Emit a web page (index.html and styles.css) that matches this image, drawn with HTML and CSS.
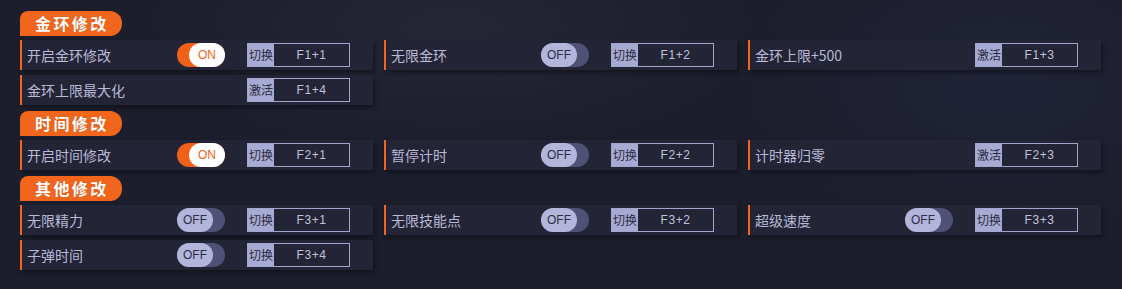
FILE: index.html
```html
<!DOCTYPE html>
<html lang="zh">
<head>
<meta charset="utf-8">
<link rel="stylesheet" href="styles.css">
</head>
<body>
<div class="page">
  <section class="section">
    <div class="badge">金环修改</div>
    <div class="grid">
      <div class="row"><span class="label">开启金环修改</span><span class="toggle on"><span class="knob">ON</span></span><span class="key"><span class="act">切换</span><span class="combo">F1+1</span></span></div>
      <div class="row"><span class="label">无限金环</span><span class="toggle"><span class="knob">OFF</span></span><span class="key"><span class="act">切换</span><span class="combo">F1+2</span></span></div>
      <div class="row"><span class="label">金环上限+500</span><span></span><span class="key"><span class="act">激活</span><span class="combo">F1+3</span></span></div>
      <div class="row"><span class="label">金环上限最大化</span><span></span><span class="key"><span class="act">激活</span><span class="combo">F1+4</span></span></div>
    </div>
  </section>
  <section class="section">
    <div class="badge">时间修改</div>
    <div class="grid">
      <div class="row"><span class="label">开启时间修改</span><span class="toggle on"><span class="knob">ON</span></span><span class="key"><span class="act">切换</span><span class="combo">F2+1</span></span></div>
      <div class="row"><span class="label">暂停计时</span><span class="toggle"><span class="knob">OFF</span></span><span class="key"><span class="act">切换</span><span class="combo">F2+2</span></span></div>
      <div class="row"><span class="label">计时器归零</span><span></span><span class="key"><span class="act">激活</span><span class="combo">F2+3</span></span></div>
    </div>
  </section>
  <section class="section">
    <div class="badge">其他修改</div>
    <div class="grid">
      <div class="row"><span class="label">无限精力</span><span class="toggle"><span class="knob">OFF</span></span><span class="key"><span class="act">切换</span><span class="combo">F3+1</span></span></div>
      <div class="row"><span class="label">无限技能点</span><span class="toggle"><span class="knob">OFF</span></span><span class="key"><span class="act">切换</span><span class="combo">F3+2</span></span></div>
      <div class="row"><span class="label">超级速度</span><span class="toggle"><span class="knob">OFF</span></span><span class="key"><span class="act">切换</span><span class="combo">F3+3</span></span></div>
      <div class="row"><span class="label">子弹时间</span><span class="toggle"><span class="knob">OFF</span></span><span class="key"><span class="act">切换</span><span class="combo">F3+4</span></span></div>
    </div>
  </section>
</div>
</body>
</html>
```
FILE: styles.css
```css
html, body {
  margin: 0;
  padding: 0;
  height: 100%;
}
body {
  background: #1c1e2c;
  background-image: radial-gradient(ellipse 300px 120px at 450px 30px, rgba(60,64,82,0.25), transparent),
                    radial-gradient(ellipse 250px 150px at 1000px 80px, rgba(40,44,80,0.35), transparent);
  font-family: "Noto Sans CJK SC", "Noto Sans", sans-serif;
  color: #b9bcd6;
  overflow: hidden;
}
.page {
  padding: 11px 0 0 20px;
  display: flex;
  flex-direction: column;
  gap: 6px;
}
.section {
  display: flex;
  flex-direction: column;
  gap: 4px;
}
.badge {
  width: 87px;
  height: 25px;
  padding-left: 15px;
  background: #f1661c;
  border-radius: 8px 12px 12px 0;
  color: #fff;
  font-weight: 700;
  font-size: 16px;
  letter-spacing: 2.4px;
  line-height: 25px;
  text-shadow: 0 0 1px rgba(120,40,0,0.5);
}
.grid {
  display: grid;
  grid-template-columns: repeat(3, 353px);
  column-gap: 11px;
  row-gap: 5px;
}
.row {
  height: 30px;
  box-sizing: border-box;
  background: #232436;
  border-left: 2px solid #f1661c;
  display: grid;
  grid-template-columns: 133px 48px 103px;
  column-gap: 22px;
  align-items: center;
  box-shadow: 2px 3px 4px rgba(0,0,0,0.35);
}
.label {
  padding-left: 5px;
  font-size: 14px;
  color: #b8bad6;
  white-space: nowrap;
}
.toggle {
  width: 48px;
  height: 24px;
  border-radius: 12px;
  background: #4f5275;
  display: flex;
  justify-content: flex-start;
}
.toggle .knob {
  width: 36px;
  height: 24px;
  border-radius: 12px;
  background: #b3b6da;
  color: #2c2e46;
  font-family: "Liberation Sans", Arial, sans-serif;
  font-size: 12px;
  line-height: 24px;
  text-align: center;
}
.toggle.on {
  background: #f0621a;
  justify-content: flex-end;
}
.toggle.on .knob {
  background: #ffffff;
  color: #f0621a;
}
.key {
  width: 103px;
  height: 24px;
  box-sizing: border-box;
  border: 1px solid #a2a5cc;
  display: flex;
  align-items: stretch;
  font-size: 12px;
}
.key .act {
  width: 26px;
  background: #a7aad2;
  color: #2b2c40;
  line-height: 22px;
  text-align: center;
  white-space: nowrap;
}
.key .combo {
  flex: 1;
  color: #c0c2da;
  line-height: 22px;
  text-align: center;
  font-family: "Liberation Sans", Arial, sans-serif;
  font-size: 12px;
  letter-spacing: 0.6px;
}
```
